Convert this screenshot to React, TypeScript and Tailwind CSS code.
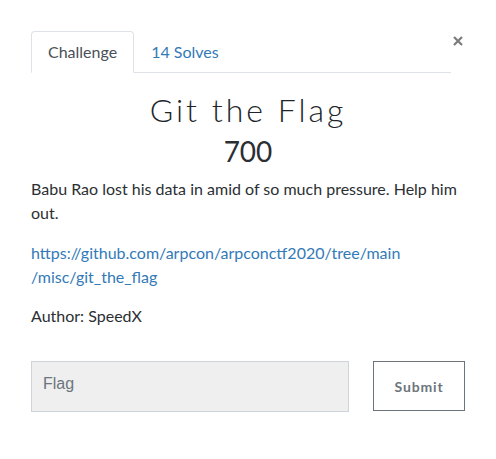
import React from "react";

export default function App() {
  return (
    <div className="w-[496px] h-[459px] bg-white px-[31px] pt-[31px] font-['Lato','Noto_Sans',sans-serif] text-[#2b2f33]">
      <div className="flex items-start">
        <ul className="flex w-[420px] border-b border-[#dee2e6]">
          <li className="-mb-px">
            <span className="block rounded-t-[4px] border border-[#dee2e6] border-b-white bg-white px-4 py-2 text-[16px] leading-6 text-[#495057]">
              Challenge
            </span>
          </li>
          <li className="-mb-px">
            <span className="block border border-transparent px-4 py-2 text-[16px] leading-6 text-[#337ab7]">
              14 Solves
            </span>
          </li>
        </ul>
        <button className="ml-[2px] mt-[5px] h-[10px] w-[10px]" aria-label="Close">
          <svg width="10" height="10" viewBox="0 0 10 10" className="block">
            <path d="M1 1 L9 9 M9 1 L1 9" stroke="#7b7b7b" strokeWidth="2.2" strokeLinecap="butt" />
          </svg>
        </button>
      </div>

      <h2 className="mt-[18px] text-center text-[32px] font-light leading-[38px] tracking-[3px] text-[#212529]">
        Git the Flag
      </h2>
      <h3 className="mt-[5px] text-center text-[28px] font-normal leading-[34px] text-[#2b2f33]">
        700
      </h3>

      <p className="mt-[9px] text-[16px] leading-6">
        Babu Rao lost his data in amid of so much pressure. Help him out.
      </p>
      <p className="mt-4 text-[16px] leading-6">
        <a className="text-[#337ab7]" href="#">
          https://github.com/arpcon/arpconctf2020/tree/main
          <br />
          /misc/git_the_flag
        </a>
      </p>
      <p className="mt-[15px] text-[16px] leading-6">Author: SpeedX</p>

      <div className="mt-[33px] flex items-start justify-between">
        <input
          type="text"
          placeholder="Flag"
          className="h-[51px] w-[318px] border border-[#ced4da] bg-[#efefef] pb-[6px] pl-[11px] font-['Liberation_Sans',Arial,sans-serif] text-[16px] text-[#495057] placeholder:text-[#6c757d] outline-none"
        />
        <button className="h-[50px] w-[92px] border border-[#6c757d] bg-white text-[14px] font-bold tracking-[0.06em] text-[#6c757d]">
          Submit
        </button>
      </div>
    </div>
  );
}
